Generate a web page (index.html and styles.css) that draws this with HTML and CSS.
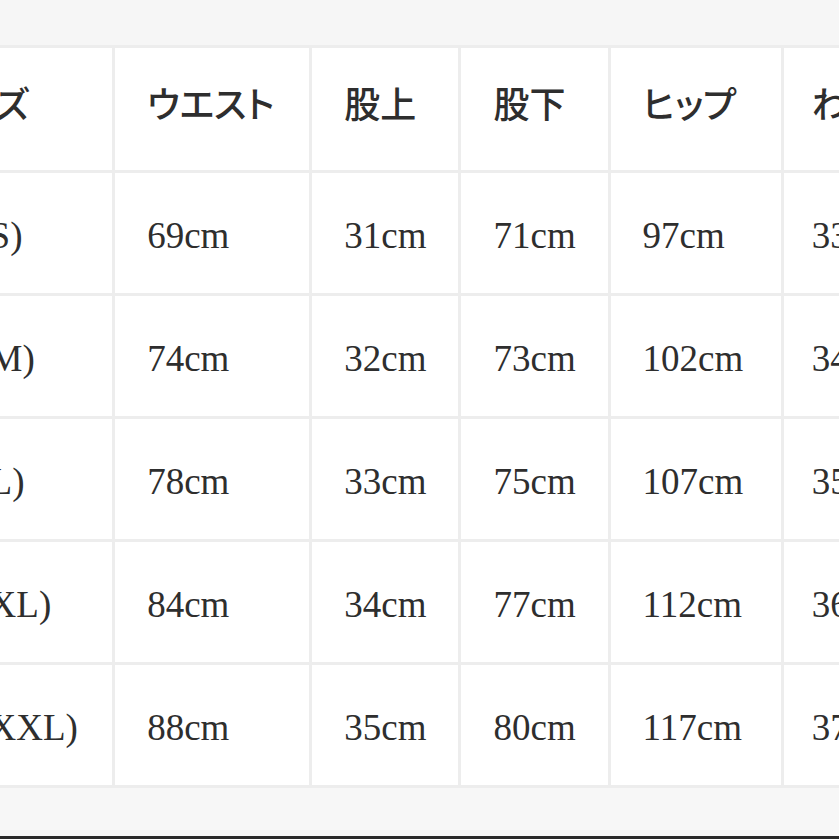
FILE: index.html
```html
<!DOCTYPE html>
<html lang="ja">
<head>
<meta charset="utf-8">
<title>サイズ表</title>
<link rel="stylesheet" href="styles.css">
</head>
<body>
<div class="page">
  <div class="top-band"></div>
  <table class="size-table">
    <colgroup>
      <col class="c-size">
      <col class="c-waist">
      <col class="c-narrow">
      <col class="c-narrow">
      <col class="c-hip">
      <col class="c-thigh">
      <col class="c-hem">
    </colgroup>
    <thead>
      <tr class="head-row">
        <th>サイズ</th>
        <th>ウエスト</th>
        <th>股上</th>
        <th>股下</th>
        <th>ヒップ</th>
        <th class="tight">わたり</th>
        <th>裾幅</th>
      </tr>
    </thead>
    <tbody>
      <tr><td>28 (S)</td><td>69cm</td><td>31cm</td><td>71cm</td><td>97cm</td><td class="tight">33cm</td><td>19cm</td></tr>
      <tr><td>29 (M)</td><td>74cm</td><td>32cm</td><td>73cm</td><td>102cm</td><td class="tight">34cm</td><td>20cm</td></tr>
      <tr><td>30 (L)</td><td>78cm</td><td>33cm</td><td>75cm</td><td>107cm</td><td class="tight">35cm</td><td>21cm</td></tr>
      <tr><td>31 (XL)</td><td>84cm</td><td>34cm</td><td>77cm</td><td>112cm</td><td class="tight">36cm</td><td>22cm</td></tr>
      <tr><td>32 (XXL)</td><td>88cm</td><td>35cm</td><td>80cm</td><td>117cm</td><td class="tight">37cm</td><td>23cm</td></tr>
    </tbody>
  </table>
  <div class="spacer"></div>
  <div class="bottom-rule"></div>
</div>
</body>
</html>
```
FILE: styles.css
```css
html, body {
  margin: 0;
  padding: 0;
  width: 839px;
  height: 839px;
  overflow: hidden;
  background: #f7f7f7;
}

.page {
  width: 839px;
  height: 839px;
  display: flex;
  flex-direction: column;
  overflow: hidden;
  font-family: "Liberation Serif", "Noto Sans CJK JP", serif;
  color: #2e2e2e;
}

.top-band {
  height: 45px;
  flex: none;
  background: #f6f6f6;
}

.size-table {
  flex: none;
  margin-left: -104px;
  width: 1193px;
  table-layout: fixed;
  border-collapse: separate;
  border-spacing: 3px;
  background: #ededed;
  font-size: 37px;
}

.c-size { width: 213px; }
.c-waist { width: 194px; }
.c-narrow { width: 146px; }
.c-hip { width: 170px; }
.c-thigh { width: 149px; }
.c-hem { width: 150px; }

.size-table th,
.size-table td {
  background: #ffffff;
  padding: 0 0 0 32px;
  text-align: left;
  vertical-align: middle;
  white-space: nowrap;
  overflow: hidden;
  font-weight: 400;
  line-height: 1;
  box-sizing: border-box;
}

.size-table .tight {
  padding-left: 28px;
}

.head-row th {
  height: 122px;
  font-weight: 500;
  font-size: 36px;
  font-feature-settings: "palt";
  padding-bottom: 6px;
}

.size-table tbody td {
  height: 120px;
  padding-top: 5px;
}

.spacer {
  flex: 1;
}

.bottom-rule {
  flex: none;
  height: 3px;
  background: #2a2a2a;
}
```
